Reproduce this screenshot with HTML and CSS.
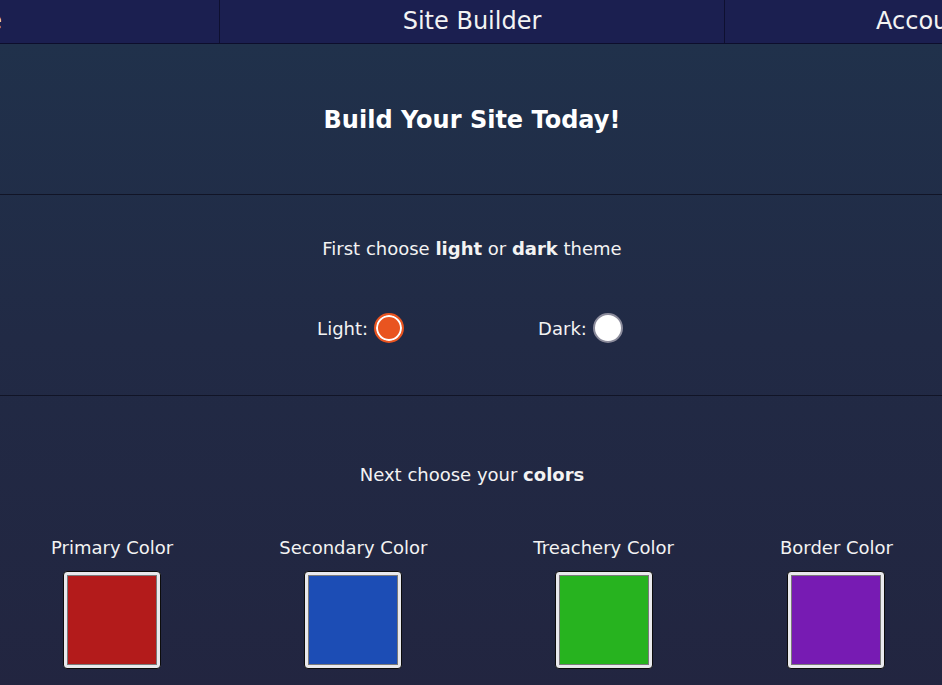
FILE: index.html
```html
<!DOCTYPE html>
<html lang="en">
<head>
<meta charset="utf-8">
<title>Site Builder</title>
<link rel="stylesheet" href="styles.css">
</head>
<body>
<nav class="topnav">
  <div class="nav-item">Home</div>
  <div class="nav-item nav-item-mid">Site Builder</div>
  <div class="nav-item">Account Settings</div>
</nav>
<main class="page">
  <section class="hero">
    <h1 class="hero-title">Build Your Site Today!</h1>
  </section>
  <section class="theme">
    <p class="lead">First choose <b>light</b> or <b>dark</b> theme</p>
    <div class="theme-options">
      <label class="theme-option">Light: <span class="radio radio-checked"></span></label>
      <label class="theme-option">Dark: <span class="radio"></span></label>
    </div>
  </section>
  <section class="colors">
    <p class="lead">Next choose your <b>colors</b></p>
    <div class="color-row">
      <div class="color-col">
        <div class="color-label">Primary Color</div>
        <div class="swatch"><div class="swatch-fill fill-red"></div></div>
      </div>
      <div class="color-col">
        <div class="color-label">Secondary Color</div>
        <div class="swatch"><div class="swatch-fill fill-blue"></div></div>
      </div>
      <div class="color-col">
        <div class="color-label">Treachery Color</div>
        <div class="swatch"><div class="swatch-fill fill-green"></div></div>
      </div>
      <div class="color-col">
        <div class="color-label">Border Color</div>
        <div class="swatch"><div class="swatch-fill fill-purple"></div></div>
      </div>
    </div>
  </section>
</main>
</body>
</html>
```

FILE: styles.css
```css
* { box-sizing: border-box; }

html, body {
  margin: 0;
  overflow-x: hidden;
}

body {
  font-family: "DejaVu Sans", sans-serif;
  color: #f3f3f3;
  background: #212540;
}

.topnav {
  display: flex;
  justify-content: center;
  width: 944px;
  height: 44px;
  background: #1b1f50;
  border-bottom: 1px solid #0d0e2c;
}

.nav-item {
  flex: 0 0 505px;
  text-align: center;
  font-size: 24px;
  line-height: 42px;
}

.nav-item-mid {
  flex-basis: 506px;
  border-left: 1px solid #0e1030;
  border-right: 1px solid #0e1030;
}

.page {
  width: 944px;
  background: linear-gradient(180deg, #20314b 0%, #212a45 45%, #222540 100%);
}

.hero {
  height: 151px;
  padding-top: 2px;
  display: flex;
  align-items: center;
  justify-content: center;
  border-bottom: 1px solid #111426;
}

.hero-title {
  margin: 0;
  font-size: 24px;
  font-weight: bold;
  color: #fff;
}

.lead {
  margin: 0;
  font-size: 18px;
  line-height: 21px;
  text-align: center;
}

.theme {
  padding: 43px 0 52px;
  border-bottom: 1px solid #111426;
}

.theme-options {
  margin-top: 54px;
  padding-right: 4px;
  display: flex;
  justify-content: center;
  gap: 134px;
  height: 30px;
}

.theme-option {
  display: flex;
  align-items: center;
  gap: 6px;
  font-size: 18px;
}

.radio {
  width: 30px;
  height: 30px;
  border-radius: 50%;
  background: #fff;
  border: 2px solid #8b8b9b;
}

.radio-checked {
  background: #e95420;
  border-color: #e95420;
  box-shadow: inset 0 0 0 2px #fff;
}

.colors {
  padding: 68px 0 30px;
}

.color-row {
  margin: 52px -2px 0 -2px;
  display: flex;
  justify-content: space-around;
}

.color-col {
  display: flex;
  flex-direction: column;
  align-items: center;
}

.color-label {
  font-size: 18px;
  line-height: 21px;
  margin-bottom: 13px;
}

.swatch {
  width: 98px;
  height: 98px;
  padding: 3px;
  border: 1px solid #0c0c0c;
  border-radius: 4px;
  background: #e9e9ed;
}

.swatch-fill {
  width: 100%;
  height: 100%;
  border: 1px solid #7a7a7a;
}

.fill-red { background: #b31b1b; }
.fill-blue { background: #1c4db5; }
.fill-green { background: #27b31f; }
.fill-purple { background: #771bb3; }
```
